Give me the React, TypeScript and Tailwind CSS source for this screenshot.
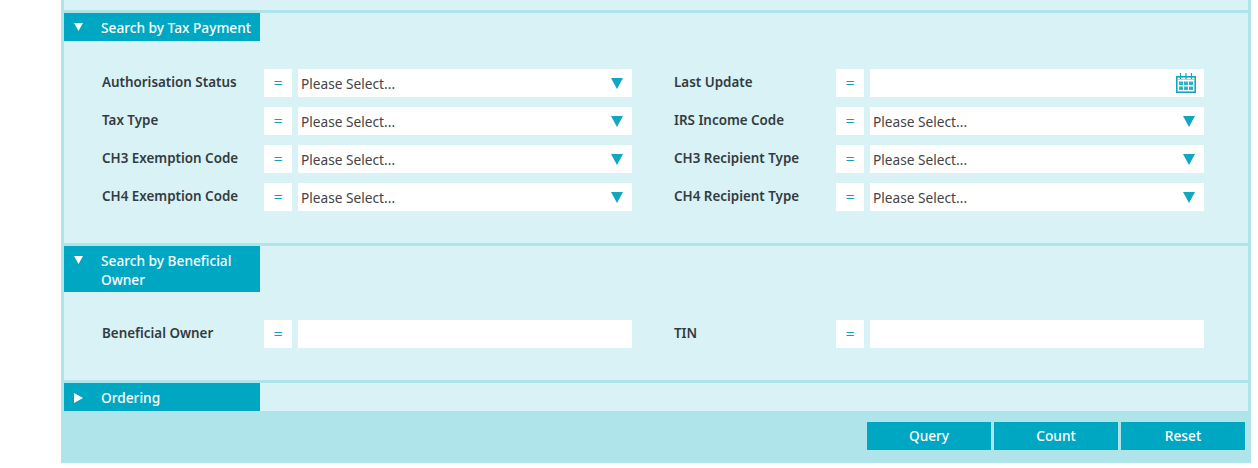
const font = { fontFamily: '"Noto Sans", sans-serif' };

function Down() {
  return (
    <svg width="12" height="11" viewBox="0 0 12 11" className="shrink-0">
      <path d="M0 0H12L6 11Z" fill="#12a6c2" />
    </svg>
  );
}

function Calendar() {
  return (
    <svg width="20" height="20" viewBox="0 0 20 20" fill="none" className="shrink-0 block">
      <rect x="0.8" y="3.8" width="18.4" height="15.4" stroke="#12a6c2" strokeWidth="1.6" />
      <path d="M4.5 0V6M10 0V6M15.5 0V6" stroke="#12a6c2" strokeWidth="1.2" />
      <rect x="2" y="6" width="16" height="1" fill="#9adbe6" />
      {[8.5, 13.5].map((y) =>
        [3, 8, 13].map((x) => <rect key={`${x}-${y}`} x={x} y={y} width="4" height="3.5" fill="#2db2ca" />),
      )}
    </svg>
  );
}

function Field({ label, kind }: { label: string; kind: "select" | "date" | "text" }) {
  return (
    <div className="flex items-center">
      <div className="w-[162px] -mt-[2px] text-[13.4px] leading-[20px] font-semibold text-[#333b3f]">{label}</div>
      <div className="w-[28px] h-[28px] bg-white flex items-center justify-center text-[16px] font-light text-[#12a0bb]">=</div>
      <div className="ml-[6px] w-[334px] h-[28px] bg-white flex items-center justify-between pl-[3px] pr-[9px] text-[13.7px] text-[#444]">
        {kind === "select" && (
          <>
            <span className="pt-[2px]">Please Select...</span>
            <Down />
          </>
        )}
        {kind === "date" && (
          <>
            <span />
            <span className="-mr-[1px]">
              <Calendar />
            </span>
          </>
        )}
      </div>
    </div>
  );
}

function Header({ title, open }: { title: string; open: boolean }) {
  return (
    <div className="w-[196px] min-h-[28px] bg-[#00a7c2] flex text-white text-[13.7px] leading-[19px] font-medium pt-[5px] pb-[3px]">
      <div className="w-[37px] shrink-0 pl-[10px] pt-[5px]">
        {open ? (
          <svg width="9" height="8" viewBox="0 0 9 8" className="block">
            <path d="M0 0H9L4.5 8Z" fill="#fff" />
          </svg>
        ) : (
          <svg width="9" height="10" viewBox="0 0 9 10" className="block">
            <path d="M0 0L9 5L0 10Z" fill="#fff" />
          </svg>
        )}
      </div>
      <div className="pr-[4px]">{title}</div>
    </div>
  );
}

function Section({ title, fields }: { title: string; fields: [string, "select" | "date" | "text"][] }) {
  return (
    <div className="bg-[#d8f2f6] mt-[3px]">
      <Header title={title} open />
      <div className="pt-[28px] pb-[32px] pl-[38px] grid grid-cols-[530px_530px] gap-x-[42px] gap-y-[10px]">
        {fields.map(([l, k]) => (
          <Field key={l} label={l} kind={k} />
        ))}
      </div>
    </div>
  );
}

export default function App() {
  return (
    <div className="h-[468px] bg-white overflow-hidden" style={font}>
      <div className="ml-[61px] w-[1190px] h-[463px] bg-[#b0e4eb] px-[3px] flex flex-col">
        <div className="h-[10px] bg-[#d8f2f6]" />
        <Section
          title="Search by Tax Payment"
          fields={[
            ["Authorisation Status", "select"],
            ["Last Update", "date"],
            ["Tax Type", "select"],
            ["IRS Income Code", "select"],
            ["CH3 Exemption Code", "select"],
            ["CH3 Recipient Type", "select"],
            ["CH4 Exemption Code", "select"],
            ["CH4 Recipient Type", "select"],
          ]}
        />
        <Section
          title="Search by Beneficial Owner"
          fields={[
            ["Beneficial Owner", "text"],
            ["TIN", "text"],
          ]}
        />
        <div className="bg-[#d8f2f6] mt-[3px]">
          <Header title="Ordering" open={false} />
        </div>
        <div className="flex justify-end gap-[3px] pt-[11px] pr-[3px]">
          {["Query", "Count", "Reset"].map((b) => (
            <button key={b} className="w-[124px] h-[28px] bg-[#00a7c2] text-white text-[13.7px] font-medium">
              {b}
            </button>
          ))}
        </div>
      </div>
    </div>
  );
}
